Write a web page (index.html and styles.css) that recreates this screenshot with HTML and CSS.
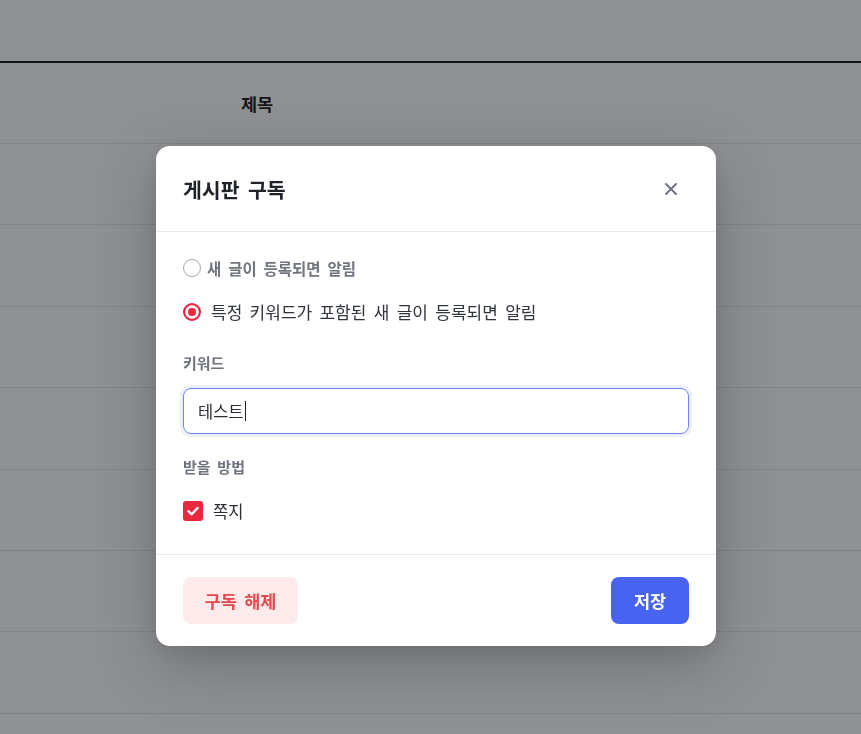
FILE: index.html
```html
<!DOCTYPE html>
<html lang="ko">
<head>
  <meta charset="UTF-8" />
  <meta name="viewport" content="width=device-width, initial-scale=1.0"/>
  <title>게시판 구독</title>
  <link rel="stylesheet" href="styles.css">
</head>
<body>
  <main class="board">
    <div class="board-head">
      <div class="col-num"></div>
      <div class="col-title">제목</div>
    </div>
    <div class="board-row"></div>
    <div class="board-row"></div>
    <div class="board-row"></div>
    <div class="board-row"></div>
    <div class="board-row"></div>
    <div class="board-row"></div>
    <div class="board-row"></div>
  </main>

  <!-- subscribe modal -->
  <div class="overlay">
    <div class="modal">
      <div class="modal-head">
        <h2 class="modal-title">게시판 구독</h2>
        <button class="close-btn" aria-label="닫기">
          <svg viewBox="0 0 12 12" width="12" height="12">
            <path d="M1 1L11 11M11 1L1 11" stroke="#6b7080" stroke-width="1.8" stroke-linecap="round"/>
          </svg>
        </button>
      </div>

      <div class="modal-body">
        <div class="options">
          <label class="option">
            <span class="radio"></span>
            <span class="option-text muted">새 글이 등록되면 알림</span>
          </label>
          <label class="option">
            <span class="radio checked"></span>
            <span class="option-text">특정 키워드가 포함된 새 글이 등록되면 알림</span>
          </label>
        </div>

        <div class="field-label keyword-label">키워드</div>
        <div class="text-input" role="textbox">테스트<span class="caret"></span></div>

        <div class="field-label method-label">받을 방법</div>
        <label class="check-row">
          <span class="checkbox">
            <svg viewBox="0 0 20 20" width="20" height="20">
              <path d="M5.5 10.3L8.7 13.3L14.6 7" fill="none" stroke="#fff" stroke-width="2.4" stroke-linecap="round" stroke-linejoin="round"/>
            </svg>
          </span>
          <span class="check-text">쪽지</span>
        </label>
      </div>

      <div class="modal-foot">
        <button class="btn btn-danger">구독 해제</button>
        <button class="btn btn-primary">저장</button>
      </div>
    </div>
  </div>
</body>
</html>
```

FILE: styles.css
```css
body {
  margin: 0;
  background: #fff;
  color: #222;
  font-family: "Noto Sans CJK KR", "Noto Sans", sans-serif;
  word-spacing: 0.16em;
}

/* Board behind the modal */
.board {
  padding-top: 61px;
}

.board-head {
  display: flex;
  align-items: center;
  height: 80px;
  border-top: 2px solid #1a1a1a;
  border-bottom: 1px solid #e3e6ea;
}

.col-num {
  width: 241px;
}

.col-title {
  font-size: 17.5px;
  font-weight: 700;
  color: #1f1f1f;
}

.board-row {
  height: 80.4px;
  border-bottom: 1px solid #e3e6ea;
}

/* Overlay */
.overlay {
  position: fixed;
  top: 0;
  left: 0;
  right: 0;
  bottom: 0;
  background: rgba(10, 12, 22, 0.46);
  padding: 146px 0 0 156px;
}

.modal {
  width: 560px;
  background: #fff;
  border-radius: 14px;
  box-shadow: 0 20px 60px rgba(0, 0, 0, 0.22), 0 4px 16px rgba(0, 0, 0, 0.08);
}

.modal-head {
  display: flex;
  align-items: center;
  justify-content: space-between;
  height: 85px;
  padding: 0 27px;
  border-bottom: 1px solid #e8e9ed;
}

.modal-title {
  margin: 0;
  font-size: 20.5px;
  font-weight: 700;
  color: #1f2329;
  line-height: 28px;
}

.close-btn {
  width: 36px;
  height: 36px;
  border: none;
  background: none;
  padding: 0;
  display: flex;
  align-items: center;
  justify-content: center;
  cursor: pointer;
}

.modal-body {
  padding: 24px 27px 31px;
}

.options {
  display: flex;
  flex-direction: column;
  gap: 20px;
}

.option {
  display: flex;
  align-items: center;
  height: 24px;
  cursor: pointer;
}

.radio {
  box-sizing: border-box;
  width: 18px;
  height: 18px;
  border-radius: 50%;
  border: 1.5px solid #a4a8b1;
  background: #fff;
  flex-shrink: 0;
}

.radio.checked {
  border: 2px solid #e8283f;
  background: #e8283f;
  box-shadow: inset 0 0 0 3px #fff;
}

.option-text {
  margin-left: 10px;
  font-size: 17px;
  line-height: 24px;
  color: #30343c;
}

.option-text.muted {
  margin-left: 6px;
  font-size: 15.5px;
  font-weight: 700;
  color: #70747e;
}

.field-label {
  font-size: 15px;
  font-weight: 700;
  line-height: 20px;
  color: #70747e;
}

.keyword-label {
  margin-top: 29px;
}

.method-label {
  margin-top: 23px;
}

.text-input {
  box-sizing: border-box;
  display: flex;
  align-items: center;
  height: 46px;
  margin-top: 15px;
  padding: 0 14px;
  border: 1.5px solid #6b84f6;
  border-radius: 8px;
  box-shadow: 0 0 0 3px rgba(80, 110, 240, 0.1);
  font-size: 16.5px;
  color: #2a2d33;
}

.caret {
  display: inline-block;
  width: 1px;
  height: 20px;
  margin-left: 1px;
  background: #222;
}

.check-row {
  display: flex;
  align-items: center;
  height: 24px;
  margin-top: 22px;
  cursor: pointer;
}

.checkbox {
  width: 20px;
  height: 20px;
  border-radius: 3px;
  background: #e8283f;
  display: flex;
  flex-shrink: 0;
}

.check-text {
  margin-left: 10px;
  font-size: 16.5px;
  line-height: 24px;
  color: #2a2d33;
}

.modal-foot {
  display: flex;
  justify-content: space-between;
  padding: 22px 27px;
  border-top: 1px solid #e8e9ed;
}

.btn {
  height: 47px;
  border: none;
  border-radius: 8px;
  font-family: inherit;
  font-size: 17.5px;
  font-weight: 700;
  word-spacing: inherit;
  cursor: pointer;
}

.btn-danger {
  width: 115px;
  background: #fdeaea;
  color: #e8474f;
}

.btn-primary {
  width: 78px;
  background: #4763f0;
  color: #fff;
}
```
